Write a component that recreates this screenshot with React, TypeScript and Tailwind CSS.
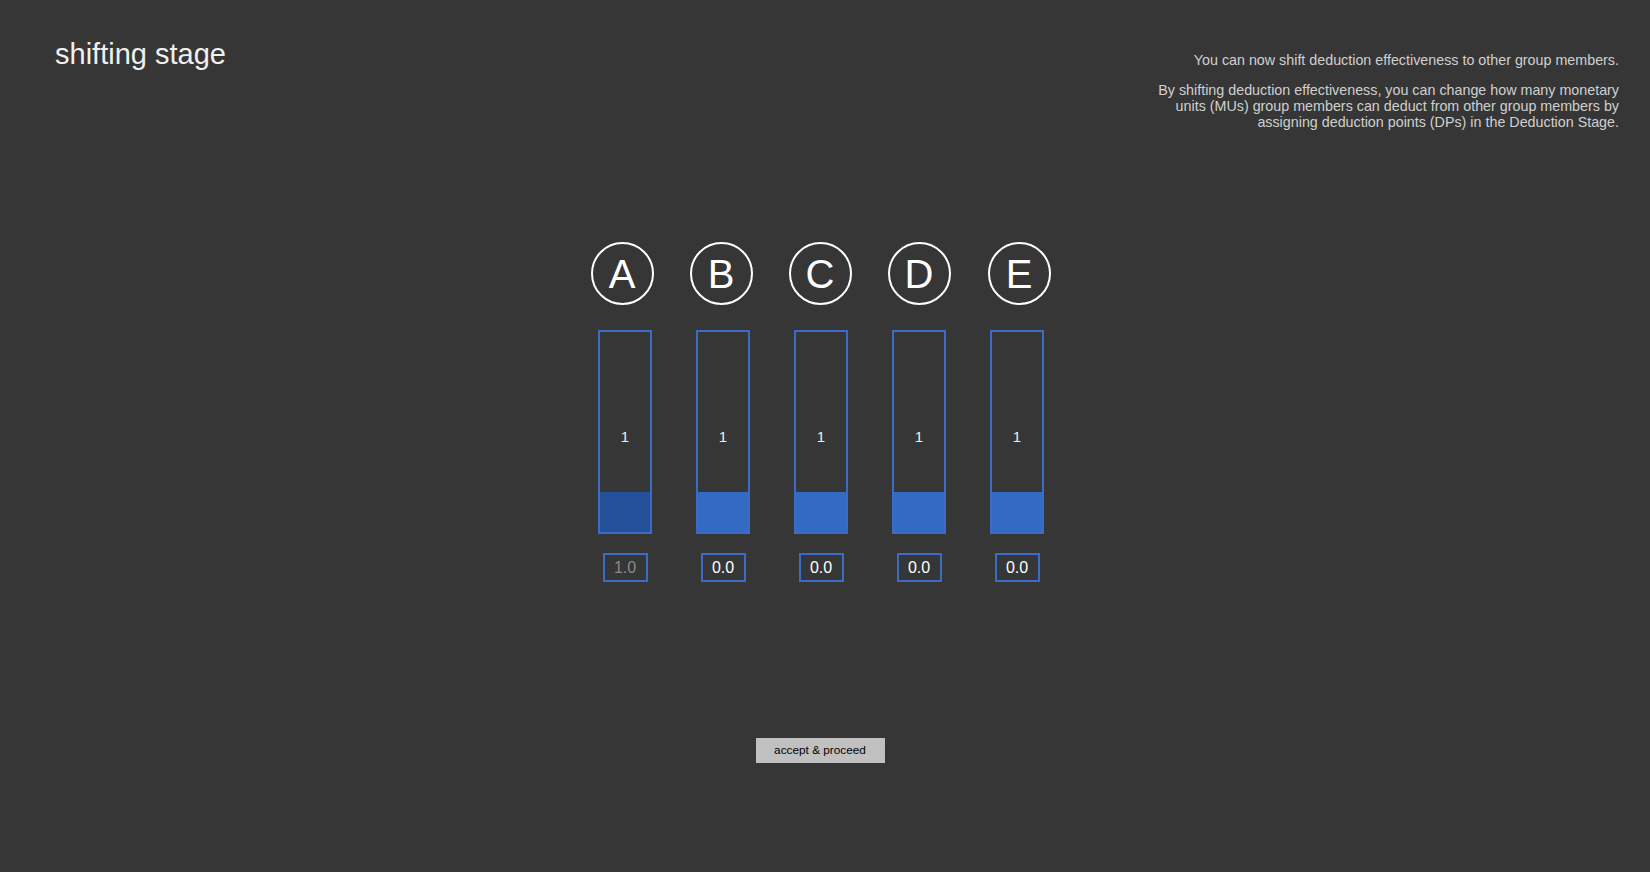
import React from 'react';

const members = [
  { id: 'A', value: '1.0', own: true, shift: '-translate-x-[3px]' },
  { id: 'B', value: '0.0', own: false, shift: '-translate-x-[2px]' },
  { id: 'C', value: '0.0', own: false, shift: '-translate-x-[1px]' },
  { id: 'D', value: '0.0', own: false, shift: 'translate-x-0' },
  { id: 'E', value: '0.0', own: false, shift: 'translate-x-[2px]' },
];

export default function App() {
  return (
    <div
      className="min-h-screen w-full bg-[#363636] flex flex-col"
      style={{ fontFamily: '"Liberation Sans", Arial, sans-serif' }}
    >
      {/* header */}
      <div className="flex justify-between items-start pl-[55px] pr-[31px] pt-[36px]">
        <h1 className="text-[29px] leading-[36px] text-[#f0f0f0]">shifting stage</h1>
        <div className="text-right text-[14.3px] leading-[16px] text-[#d0d0d0] pt-[16px]">
          <p>You can now shift deduction effectiveness to other group members.</p>
          <p className="mt-[14px]">
            By shifting deduction effectiveness, you can change how many monetary
            <br />
            units (MUs) group members can deduct from other group members by
            <br />
            assigning deduction points (DPs) in the Deduction Stage.
          </p>
        </div>
      </div>

      {/* members */}
      <div className="flex justify-center mt-[112px] pr-[8px]">
        {members.map((m) => (
          <div key={m.id} className="w-[98px] flex flex-col items-center">
            <div
              className={
                'w-[63px] h-[63px] rounded-full border-[2.5px] border-white flex items-center justify-center text-[40px] leading-none text-white ' +
                m.shift
              }
            >
              {m.id}
            </div>
            <div className="relative mt-[25px] w-[54px] h-[204px] border-2 border-[#3a6cc6] flex flex-col">
              <div className="flex-1" />
              <div className={m.own ? 'h-[40px] bg-[#24509b]' : 'h-[40px] bg-[#336ac4]'} />
              <span className="absolute left-0 right-0 top-[96px] text-center text-[15px] leading-[18px] text-[#eeeeee]">
                1
              </span>
            </div>
            <div
              className={
                'mt-[19px] w-[45px] h-[29px] border-2 border-[#3a6cc6] flex items-center justify-center text-[16px] ' +
                (m.own ? 'text-[#8a8a8a]' : 'text-white')
              }
            >
              {m.value}
            </div>
          </div>
        ))}
      </div>

      {/* button */}
      <div className="flex justify-center mt-[156px] pr-[10px]">
        <button className="w-[129px] h-[25px] bg-[#c0c0c0] text-[11.8px] text-black">
          accept &amp; proceed
        </button>
      </div>
    </div>
  );
}
